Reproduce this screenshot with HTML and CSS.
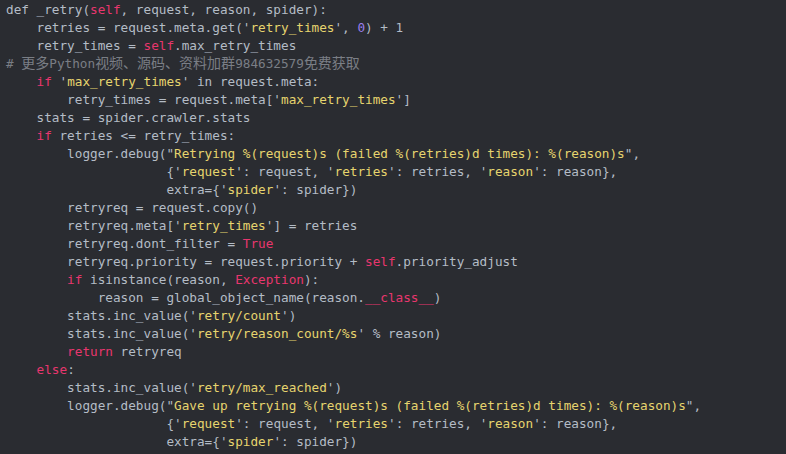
FILE: index.html
```html
<!DOCTYPE html>
<html>
<head>
<meta charset="utf-8">
<link rel="stylesheet" href="styles.css">
</head>
<body>
<pre class="code"><code>def _retry(<span class="k">self</span>, request, reason, spider):
    retries = request.meta.get(<span class="q">'</span><span class="s">retry_times</span><span class="q">'</span>, <span class="n">0</span>) + 1
    retry_times = <span class="k">self</span>.max_retry_times
<span class="c"># <span class="cjk">更多</span>Python<span class="cjk">视频、源码、资料加群</span>984632579<span class="cjk">免费获取</span></span>
    <span class="k">if</span> <span class="q">'</span><span class="s">max_retry_times</span><span class="q">'</span> in request.meta:
        retry_times = request.meta[<span class="q">'</span><span class="s">max_retry_times</span><span class="q">'</span>]
    stats = spider.crawler.stats
    <span class="k">if</span> retries &lt;= retry_times:
        logger.debug(<span class="q">"</span><span class="s">Retrying %(request)s (failed %(retries)d times): %(reason)s</span><span class="q">"</span>,
                     {<span class="q">'</span><span class="s">request</span><span class="q">'</span>: request, <span class="q">'</span><span class="s">retries</span><span class="q">'</span>: retries, <span class="q">'</span><span class="s">reason</span><span class="q">'</span>: reason},
                     extra={<span class="q">'</span><span class="s">spider</span><span class="q">'</span>: spider})
        retryreq = request.copy()
        retryreq.meta[<span class="q">'</span><span class="s">retry_times</span><span class="q">'</span>] = retries
        retryreq.dont_filter = <span class="k">True</span>
        retryreq.priority = request.priority + <span class="k">self</span>.priority_adjust
        <span class="k">if</span> isinstance(reason, <span class="k">Exception</span>):
            reason = global_object_name(reason.<span class="k">__class__</span>)
        stats.inc_value(<span class="q">'</span><span class="s">retry/count</span><span class="q">'</span>)
        stats.inc_value(<span class="q">'</span><span class="s">retry/reason_count/%s</span><span class="q">'</span> % reason)
        <span class="k">return</span> retryreq
    <span class="k">else</span>:
        stats.inc_value(<span class="q">'</span><span class="s">retry/max_reached</span><span class="q">'</span>)
        logger.debug(<span class="q">"</span><span class="s">Gave up retrying %(request)s (failed %(retries)d times): %(reason)s</span><span class="q">"</span>,
                     {<span class="q">'</span><span class="s">request</span><span class="q">'</span>: request, <span class="q">'</span><span class="s">retries</span><span class="q">'</span>: retries, <span class="q">'</span><span class="s">reason</span><span class="q">'</span>: reason},
                     extra={<span class="q">'</span><span class="s">spider</span><span class="q">'</span>: spider})</code></pre>
</body>
</html>
```
FILE: styles.css
```css
html, body {
  margin: 0;
  padding: 0;
  background: #2a2c31;
  height: 100%;
  overflow: hidden;
}
.code {
  margin: 0;
  padding: 1px 0 0 6px;
  font-family: "DejaVu Sans Mono", "Liberation Mono", "Noto Sans CJK SC", monospace;
  font-size: 12.7px;
  line-height: 18px;
  color: #b4bcc6;
  white-space: pre;
}
.k { color: #e8366e; }
.s { color: #e6d46e; }
.q { color: #b4bcc6; }
.n { color: #9a7ff0; }
.c { color: #7a7e85; }
.cjk {
  font-family: "Noto Sans CJK SC", sans-serif;
  font-size: 14px;
  line-height: 1;
}
```
